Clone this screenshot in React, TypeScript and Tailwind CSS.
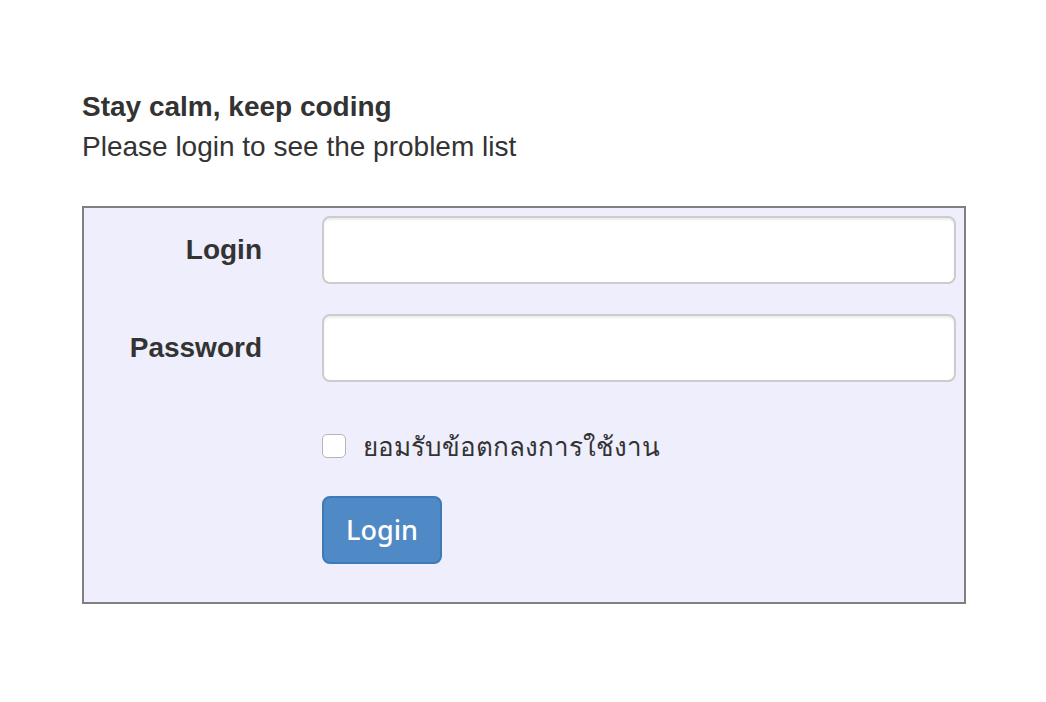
import React from "react";

export default function App() {
  return (
    <div className="min-h-[702px] w-full bg-white text-[#333333]" style={{ fontFamily: '"Liberation Sans", Arial, sans-serif' }}>
      <div className="pl-[82px] pr-[80px] pt-[87px]">
        <div className="text-[28px] leading-[40px]">
          <div className="font-bold">Stay calm, keep coding</div>
          <div>Please login to see the problem list</div>
        </div>
        <div className="mt-[39px] border-2 border-[#808080] bg-[#eeeefc] pt-[8px] pb-[8px] pr-[8px]">
          <div className="flex mb-[30px]">
            <div className="w-[208px] shrink-0 pr-[30px] pt-[14px] text-right text-[28px] leading-[40px] font-bold">Login</div>
            <div className="flex-1 pl-[30px]">
              <input type="text" className="block h-[68px] w-full rounded-[8px] border-2 border-[#cccccc] bg-white shadow-[inset_0_2px_2px_rgba(0,0,0,0.075)] outline-none" />
            </div>
          </div>
          <div className="flex mb-[30px]">
            <div className="w-[208px] shrink-0 pr-[30px] pt-[14px] text-right text-[28px] leading-[40px] font-bold">Password</div>
            <div className="flex-1 pl-[30px]">
              <input type="password" className="block h-[68px] w-full rounded-[8px] border-2 border-[#cccccc] bg-white shadow-[inset_0_2px_2px_rgba(0,0,0,0.075)] outline-none" />
            </div>
          </div>
          <div className="flex mb-[30px]">
            <div className="w-[208px] shrink-0" />
            <div className="flex-1 pl-[30px] pt-[14px]">
              <label className="flex items-start text-[28px] leading-[40px]" style={{ fontFamily: '"Noto Sans", "Liberation Sans", sans-serif' }}>
                <span className="mt-[8px] block h-[24px] w-[24px] shrink-0 rounded-[5px] border border-[#b5b5b5] bg-white" />
                <span className="ml-[17px] text-[26px] text-[#333333]">ยอมรับข้อตกลงการใช้งาน</span>
              </label>
            </div>
          </div>
          <div className="flex mb-[30px]">
            <div className="w-[208px] shrink-0" />
            <div className="flex-1 pl-[30px]">
              <button
                type="button"
                className="h-[68px] w-[120px] rounded-[8px] border-2 border-[#3f7ab8] bg-[#4f8ac6] text-[27px] font-medium text-white"
                style={{ fontFamily: '"Noto Sans", sans-serif' }}
              >
                Login
              </button>
            </div>
          </div>
        </div>
      </div>
    </div>
  );
}
